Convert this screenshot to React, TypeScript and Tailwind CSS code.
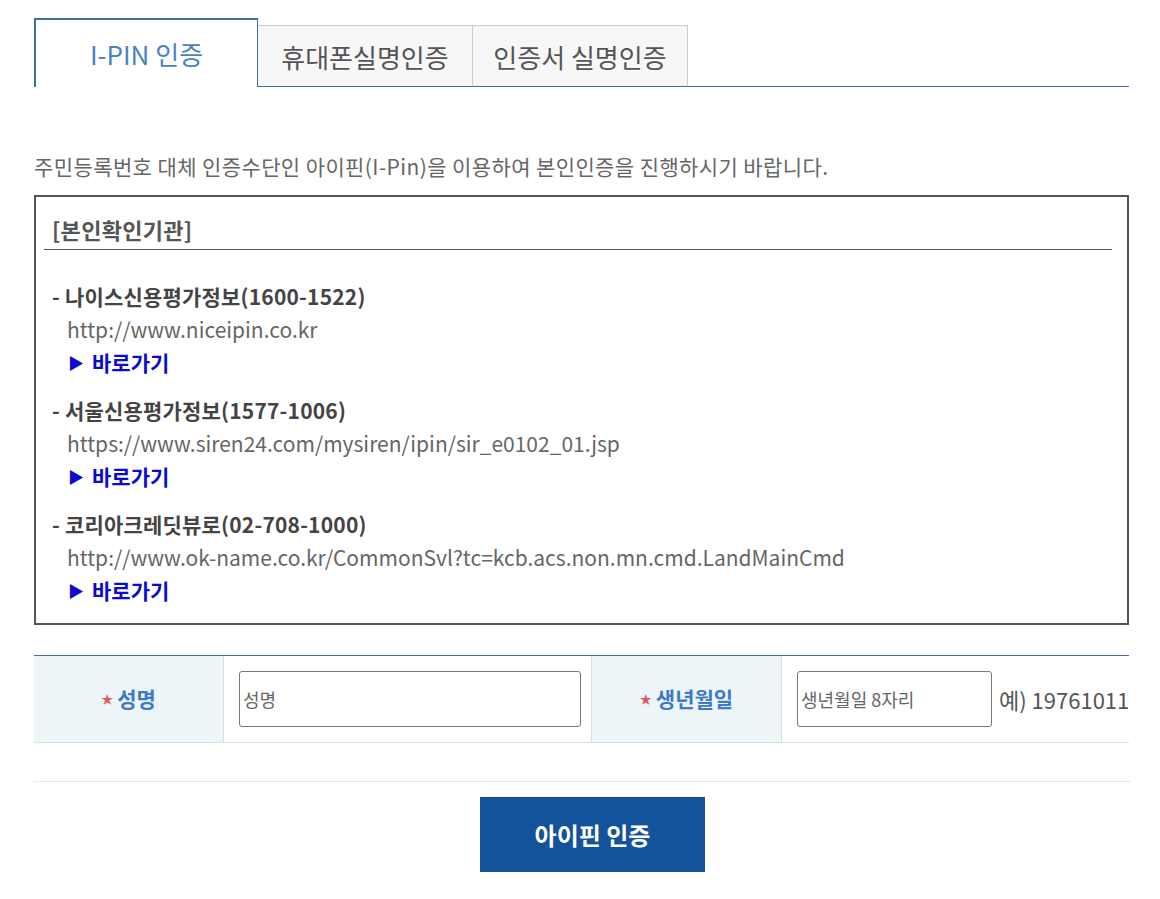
import React from "react";

const font = { fontFamily: '"Noto Sans CJK KR", "Noto Sans", sans-serif' };

function Item({ title, url }: { title: string; url: string }) {
  return (
    <div className="flex flex-col">
      <div className="leading-[33px] text-[21px] font-bold text-[#444] tracking-[0.2px]">- {title}</div>
      <div className="leading-[33px] text-[21px] text-[#666] pl-[15px]">{url}</div>
      <div className="leading-[33px] text-[21px] font-bold text-[#0a0ad2] pl-[16px] flex items-center gap-[8px]">
        <span className="text-[16px]">▶</span>
        <span>바로가기</span>
      </div>
    </div>
  );
}

export default function App() {
  return (
    <div className="bg-white w-[1160px] h-[899px] pl-[34px] pr-[31px] pt-[18px]" style={font}>
      {/* Tabs */}
      <div className="flex items-end">
        <div className="w-[224px] h-[69px] border-t-2 border-l-2 border-r border-[#3d6fa6] bg-white flex items-center justify-center text-[26px] text-[#4a82c2]">
          I-PIN 인증
        </div>
        <div className="w-[215px] h-[62px] border-t border-r border-[#cccccc] border-b border-b-[#3d6fa6] bg-[#f7f7f7] flex items-center justify-center text-[26px] text-[#555]">
          휴대폰실명인증
        </div>
        <div className="w-[215px] h-[62px] border-t border-r border-[#cccccc] border-b border-b-[#3d6fa6] bg-[#f7f7f7] flex items-center justify-center text-[26px] text-[#555]">
          인증서 실명인증
        </div>
        <div className="flex-1 border-b border-[#3d6fa6]" />
      </div>

      {/* Description */}
      <p className="mt-[66px] leading-[26px] text-[21px] text-[#666] tracking-[0.4px] whitespace-nowrap">
        주민등록번호 대체 인증수단인 아이핀(I-Pin)을 이용하여 본인인증을 진행하시기 바랍니다.
      </p>

      {/* Box */}
      <div className="mt-[16px] border-2 border-[#555]">
        <div className="ml-[8px] mr-[15px] pt-[18px] pb-[6px] pl-[8px] border-b border-[#555] leading-[28px] text-[22px] font-bold text-[#555] tracking-[0.3px]">
          [본인확인기관]
        </div>
        <div className="px-[16px] pt-[30px] pb-[16px] flex flex-col gap-[15px]">
          <Item title="나이스신용평가정보(1600-1522)" url="http://www.niceipin.co.kr" />
          <Item title="서울신용평가정보(1577-1006)" url="https://www.siren24.com/mysiren/ipin/sir_e0102_01.jsp" />
          <Item title="코리아크레딧뷰로(02-708-1000)" url="http://www.ok-name.co.kr/CommonSvl?tc=kcb.acs.non.mn.cmd.LandMainCmd" />
        </div>
      </div>

      {/* Form row */}
      <div className="mt-[30px] grid grid-cols-[189px_368px_190px_1fr] h-[88px] border-t border-[#4a6b93] border-b border-b-[#dddddd]">
        <div className="bg-[#edf5f9] flex items-center justify-center gap-[4px] text-[21px] font-bold text-[#3d7bc6]">
          <span className="text-[12px] text-[#e25b5b]">★</span>
          <span>성명</span>
        </div>
        <div className="border-l border-[#dddddd] flex items-center pl-[15px]">
          <input
            placeholder="성명"
            className="w-[342px] h-[56px] border border-[#777] rounded-[3px] px-[3px] text-[18px] placeholder:text-[#666] outline-none"
            style={font}
          />
        </div>
        <div className="border-l border-[#dddddd] bg-[#edf5f9] flex items-center justify-center gap-[4px] text-[21px] font-bold text-[#3d7bc6]">
          <span className="text-[12px] text-[#e25b5b]">★</span>
          <span>생년월일</span>
        </div>
        <div className="border-l border-[#dddddd] flex items-center pl-[15px] gap-[7px]">
          <input
            placeholder="생년월일 8자리"
            className="w-[195px] h-[56px] border border-[#777] rounded-[3px] px-[3px] text-[18px] placeholder:text-[#666] outline-none"
            style={font}
          />
          <span className="text-[22px] text-[#555] whitespace-nowrap">예) 19761011</span>
        </div>
      </div>

      {/* Dotted separator */}
      <div className="mt-[38px] border-t border-dotted border-[#cccccc]" />

      {/* Button */}
      <div className="mt-[15px] flex">
        <button
          className="ml-[446px] w-[225px] h-[75px] bg-[#12539b] text-white text-[24px] font-bold"
          style={font}
        >
          아이핀 인증
        </button>
      </div>
    </div>
  );
}
